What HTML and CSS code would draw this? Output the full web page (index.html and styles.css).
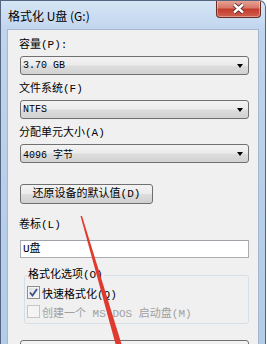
FILE: index.html
```html
<!DOCTYPE html>
<html lang="zh-CN">
<head>
  <meta charset="UTF-8" />
  <title>格式化 U盘 (G:)</title>
  <meta name="viewport" content="width=device-width, initial-scale=1.0" />
  <link rel="stylesheet" href="styles.css">
</head>
<body>
  <div class="window">
    <div class="titlebar">
      <span class="title">格式化 U盘 (G:)</span>
      <button class="close" aria-label="关闭">
        <svg width="13" height="11" viewBox="0 0 13 11">
          <path d="M2 1.5 L11 9.5 M11 1.5 L2 9.5" stroke="#4a2a26" stroke-width="4.2" />
          <path d="M2 1.5 L11 9.5 M11 1.5 L2 9.5" stroke="#fff" stroke-width="2.4" />
        </svg>
      </button>
    </div>

    <div class="client">
      <div class="label first">容量(P):</div>
      <div class="combo"><span>3.70 GB</span><span class="arrow"></span></div>

      <div class="label">文件系统(F)</div>
      <div class="combo"><span>NTFS</span><span class="arrow"></span></div>

      <div class="label">分配单元大小(A)</div>
      <div class="combo"><span>4096 字节</span><span class="arrow"></span></div>

      <div class="btn-restore">还原设备的默认值(D)</div>

      <div class="label vol">卷标(L)</div>
      <div class="textbox">U盘</div>

      <fieldset class="group">
        <legend>格式化选项(O)</legend>
        <div class="check-row">
          <span class="checkbox checked">
            <svg width="9" height="9" viewBox="0 0 9 9">
              <path d="M1 4.5 L3.5 7.5 L8 1" fill="none" stroke="#3d5288" stroke-width="1.8" />
            </svg>
          </span>
          <span>快速格式化(Q)</span>
        </div>
        <div class="check-row disabled">
          <span class="checkbox"></span>
          <span>创建一个 MS-DOS 启动盘(M)</span>
        </div>
      </fieldset>

      <div class="btn-start"></div>
    </div>
  </div>

  <!-- 红色箭头标注 -->
  <svg class="pointer" width="267" height="344" viewBox="0 0 267 344">
    <polygon points="80.5,216 82,216 121.5,344 115.5,344" fill="#e0392e" />
  </svg>
</body>
</html>
```

FILE: styles.css
```css
html, body {
  margin: 0;
  height: 344px;
  overflow: hidden;
  background: #fff;
}
body {
  position: relative;
  font-family: "Liberation Mono", "Noto Sans CJK SC", monospace;
  font-size: 11px;
  color: #000;
}
.window {
  box-sizing: border-box;
  width: 266px;
  height: 344px;
  padding: 0 6px;
  border: 1px solid #55667e;
  border-bottom: none;
  border-radius: 0 7px 0 0;
  background: linear-gradient(#d6e5f5, #bfd5ee 30px, #b7cfea 200px, #b3cce8);
  overflow: hidden;
}
.titlebar {
  height: 28px;
  display: flex;
  justify-content: space-between;
  align-items: flex-start;
}
.title {
  font-family: "Noto Sans CJK SC", sans-serif;
  font-size: 12px;
  line-height: 14px;
  margin: 8px 0 0 1px;
}
.close {
  width: 45px;
  height: 18px;
  margin: -1px -2px 0 0;
  padding: 0;
  border: 1px solid #6a2c24;
  border-top: none;
  border-radius: 0 0 4px 4px;
  background: linear-gradient(#e9a898, #d7786a 45%, #c43c2d 55%, #d0604e);
  display: flex;
  align-items: center;
  justify-content: center;
  box-shadow: inset 0 0 0 1px rgba(255, 255, 255, 0.35);
}
.client {
  height: 320px;
  padding: 8px 9px 0 12px;
  border: 1px solid #a6b8ce;
  border-bottom: none;
  background: #f0f0f0;
}
.label {
  line-height: 14px;
  height: 14px;
  margin-top: 7px;
  margin-left: -1px;
}
.label.first {
  margin-top: 0;
}
.label.vol {
  margin-top: 14px;
}
.combo {
  box-sizing: border-box;
  height: 19px;
  margin-top: 4px;
  padding: 0 5px 0 2px;
  border: 1px solid #707070;
  border-radius: 3px;
  background: linear-gradient(#f3f3f3, #ebebeb 48%, #dddddd 52%, #d2d2d2);
  display: flex;
  align-items: center;
  justify-content: space-between;
  font-size: 10px;
}
.combo + .label {
  margin-top: 7px;
}
.arrow {
  width: 0;
  height: 0;
  border-left: 3.5px solid transparent;
  border-right: 3.5px solid transparent;
  border-top: 4px solid #000;
}
.btn-restore {
  box-sizing: border-box;
  width: 133px;
  height: 20px;
  margin-top: 21px;
  border: 1px solid #707070;
  border-radius: 3px;
  background: linear-gradient(#f3f3f3, #ebebeb 48%, #dddddd 52%, #cfcfcf);
  text-align: center;
  line-height: 18px;
}
.textbox {
  box-sizing: border-box;
  height: 18px;
  margin-top: 8px;
  padding-left: 2px;
  border: 1px solid #abadb3;
  border-top-color: #a0a3aa;
  background: #fff;
  line-height: 16px;
}
.group {
  margin: 10px 0 0 4px;
  padding: 1px 2px 2px 2px;
  border: 1px solid #d5dfe5;
  border-radius: 3px;
}
.group legend {
  padding: 0 1px;
  line-height: 14px;
}
.check-row {
  height: 19px;
  display: flex;
  align-items: center;
  gap: 2px;
}
.check-row.disabled {
  color: #a0a0a0;
}
.checkbox {
  box-sizing: border-box;
  width: 13px;
  height: 13px;
  border: 1px solid #8e8f8f;
  background: linear-gradient(135deg, #dcdcdc, #fbfbfb);
  box-shadow: inset 0 0 0 1px #f4f4f4;
  display: flex;
  align-items: center;
  justify-content: center;
}
.disabled .checkbox {
  border-color: #c6c6c6;
  background: #f4f4f4;
  box-shadow: none;
}
.btn-start {
  height: 22px;
  margin-top: 16px;
  border: 1px solid #707070;
  border-radius: 3px;
  background: linear-gradient(#f3f3f3, #e6e6e6);
}
.pointer {
  position: absolute;
  left: 0;
  top: 0;
  pointer-events: none;
}
```
